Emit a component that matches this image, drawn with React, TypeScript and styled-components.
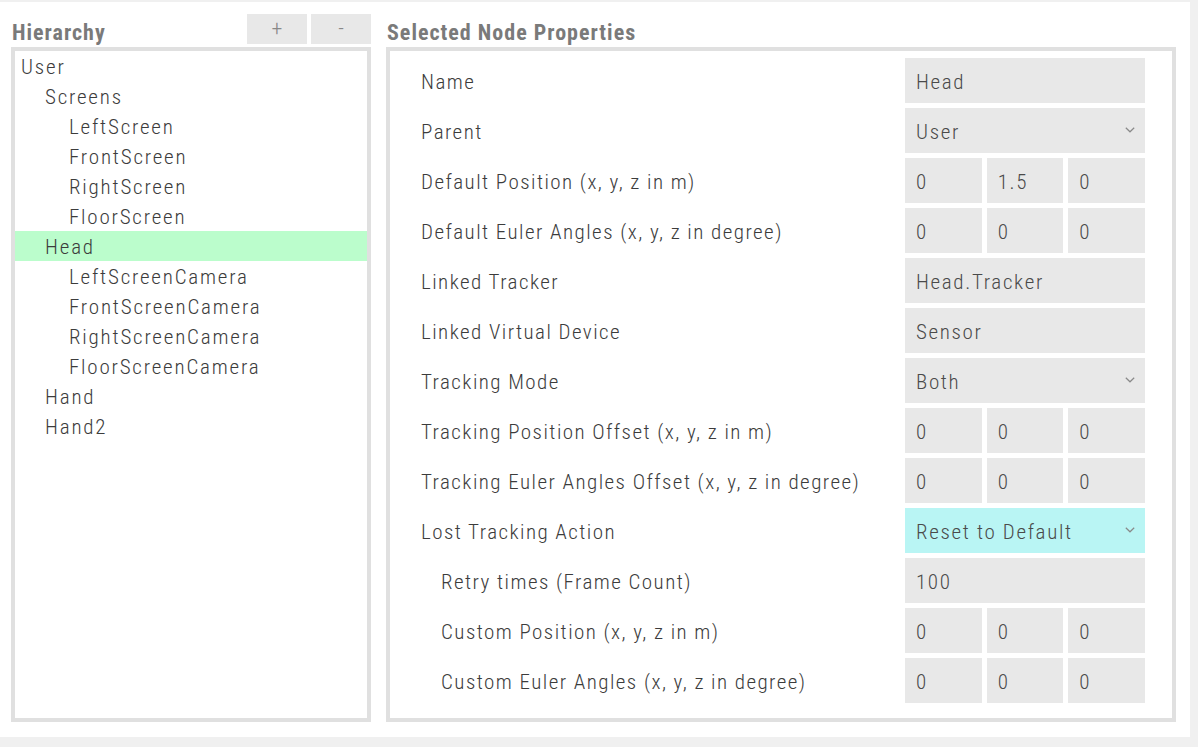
import React from "react";
import styled, { createGlobalStyle } from "styled-components";

const GlobalStyle = createGlobalStyle`
  html, body { margin: 0; padding: 0; background: #f0f0f0; }
  body { font-family: "Roboto Condensed", Roboto, "Liberation Sans", sans-serif; }
  * { box-sizing: border-box; }
`;

const Page = styled.div`
  margin-top: 2px;
  width: 1190px;
  height: 735px;
  background: #fff;
  padding: 12px 14px 15px 11px;
  display: flex;
  gap: 15px;
`;

const Column = styled.section<{ $width: number }>`
  width: ${(p) => p.$width}px;
  display: flex;
  flex-direction: column;
`;

const Header = styled.div`
  height: 33px;
  display: flex;
  align-items: flex-start;
  justify-content: space-between;
`;

const Title = styled.h2`
  margin: 0;
  padding: 8px 0 0 1px;
  font-size: 22px;
  line-height: 1;
  font-weight: 700;
  letter-spacing: 1px;
  color: #7a7a7a;
`;

const ButtonGroup = styled.div`
  display: flex;
  gap: 4px;
`;

const ToolButton = styled.button`
  width: 60px;
  height: 30px;
  border: none;
  background: #e8e8e8;
  color: #888;
  font-family: inherit;
  font-weight: 300;
  font-size: 22px;
  line-height: 30px;
  padding: 0;
`;

const Box = styled.div`
  flex: 1;
  border: 4px solid #e0e0e0;
  background: #fff;
`;

const TreeRow = styled.div<{ $level: number; $selected?: boolean }>`
  height: 30px;
  line-height: 28px;
  padding: 2px 0 0 ${(p) => 6 + p.$level * 24}px;
  font-size: 21px;
  font-weight: 300;
  letter-spacing: 1.8px;
  color: #3c3c3c;
  background: ${(p) => (p.$selected ? "#bbfdcc" : "transparent")};
  white-space: nowrap;
`;

const PropList = styled.div`
  padding: 7px 27px 10px 31px;
  display: flex;
  flex-direction: column;
  gap: 5px;
`;

const PropRow = styled.div`
  display: grid;
  grid-template-columns: 1fr 240px;
  align-items: center;
  height: 45px;
`;

const Label = styled.div<{ $indent?: boolean }>`
  padding-left: ${(p) => (p.$indent ? 20 : 0)}px;
  padding-top: 2px;
  font-size: 21px;
  font-weight: 300;
  letter-spacing: 1.45px;
  color: #3c3c3c;
  white-space: nowrap;
`;

const Field = styled.div<{ $accent?: boolean }>`
  height: 45px;
  background: ${(p) => (p.$accent ? "#b9f5f4" : "#e8e8e8")};
  display: flex;
  align-items: center;
  justify-content: space-between;
  padding: 2px 10px 0 11px;
  font-size: 21px;
  font-weight: 300;
  letter-spacing: 1.65px;
  color: #4a4a4a;
  white-space: nowrap;
`;

const Triple = styled.div`
  display: grid;
  grid-template-columns: 1fr 1fr 1fr;
  gap: 5px;
`;

const Chevron = () => (
  <svg width="10" height="6" viewBox="0 0 10 6" style={{ marginBottom: 3 }}>
    <path d="M0.8 0.8 L5 4.8 L9.2 0.8" fill="none" stroke="#8a8a8a" strokeWidth="1.2" />
  </svg>
);

type Prop =
  | { label: string; indent?: boolean; kind: "text"; value: string }
  | { label: string; indent?: boolean; kind: "select"; value: string; accent?: boolean }
  | { label: string; indent?: boolean; kind: "vec"; value: [string, string, string] };

const props: Prop[] = [
  { label: "Name", kind: "text", value: "Head" },
  { label: "Parent", kind: "select", value: "User" },
  { label: "Default Position (x, y, z in m)", kind: "vec", value: ["0", "1.5", "0"] },
  { label: "Default Euler Angles (x, y, z in degree)", kind: "vec", value: ["0", "0", "0"] },
  { label: "Linked Tracker", kind: "text", value: "Head.Tracker" },
  { label: "Linked Virtual Device", kind: "text", value: "Sensor" },
  { label: "Tracking Mode", kind: "select", value: "Both" },
  { label: "Tracking Position Offset (x, y, z in m)", kind: "vec", value: ["0", "0", "0"] },
  { label: "Tracking Euler Angles Offset (x, y, z in degree)", kind: "vec", value: ["0", "0", "0"] },
  { label: "Lost Tracking Action", kind: "select", value: "Reset to Default", accent: true },
  { label: "Retry times (Frame Count)", indent: true, kind: "text", value: "100" },
  { label: "Custom Position (x, y, z in m)", indent: true, kind: "vec", value: ["0", "0", "0"] },
  { label: "Custom Euler Angles (x, y, z in degree)", indent: true, kind: "vec", value: ["0", "0", "0"] },
];

const tree: { name: string; level: number; selected?: boolean }[] = [
  { name: "User", level: 0 },
  { name: "Screens", level: 1 },
  { name: "LeftScreen", level: 2 },
  { name: "FrontScreen", level: 2 },
  { name: "RightScreen", level: 2 },
  { name: "FloorScreen", level: 2 },
  { name: "Head", level: 1, selected: true },
  { name: "LeftScreenCamera", level: 2 },
  { name: "FrontScreenCamera", level: 2 },
  { name: "RightScreenCamera", level: 2 },
  { name: "FloorScreenCamera", level: 2 },
  { name: "Hand", level: 1 },
  { name: "Hand2", level: 1 },
];

function renderField(p: Prop) {
  if (p.kind === "vec") {
    return (
      <Triple>
        {p.value.map((v, i) => (
          <Field key={i}>{v}</Field>
        ))}
      </Triple>
    );
  }
  if (p.kind === "select") {
    return (
      <Field $accent={p.accent}>
        <span>{p.value}</span>
        <Chevron />
      </Field>
    );
  }
  return <Field>{p.value}</Field>;
}

export default function App() {
  return (
    <>
      <GlobalStyle />
      <Page>
        <Column $width={360}>
          <Header>
            <Title>Hierarchy</Title>
            <ButtonGroup>
              <ToolButton>+</ToolButton>
              <ToolButton>-</ToolButton>
            </ButtonGroup>
          </Header>
          <Box>
            {tree.map((t) => (
              <TreeRow key={t.name} $level={t.level} $selected={t.selected}>
                {t.name}
              </TreeRow>
            ))}
          </Box>
        </Column>
        <Column $width={790}>
          <Header>
            <Title>Selected Node Properties</Title>
          </Header>
          <Box>
            <PropList>
              {props.map((p) => (
                <PropRow key={p.label}>
                  <Label $indent={p.indent}>{p.label}</Label>
                  {renderField(p)}
                </PropRow>
              ))}
            </PropList>
          </Box>
        </Column>
      </Page>
    </>
  );
}
